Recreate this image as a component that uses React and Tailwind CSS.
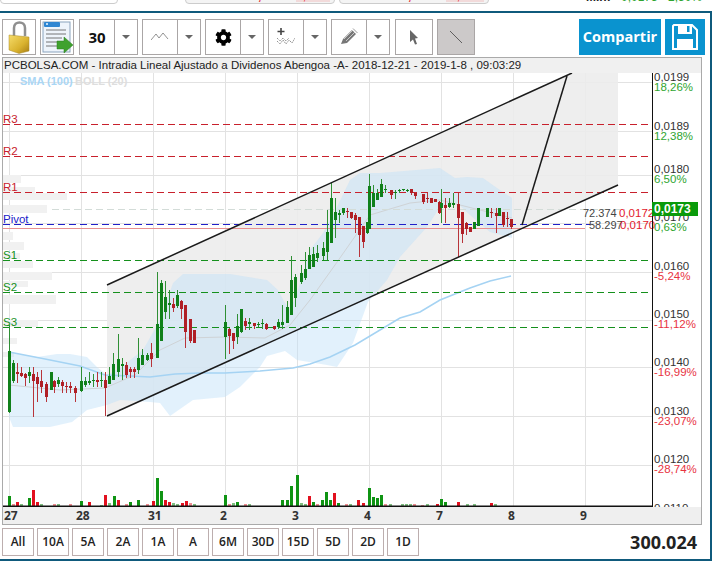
import { FaCog } from "react-icons/fa";

const font = { fontFamily: '"Liberation Sans", Arial, sans-serif' };
const openSans = { fontFamily: '"Open Sans", sans-serif' };

// x, body top, body bottom, high, low, colour
const candles = [
  [9,351,412,325,413,"g"],[13,363,381,360,383,"g"],[17,372,374,363,383,"r"],[21,373,376,367,377,"r"],[25,374,378,373,386,"r"],[29,372,376,367,383,"g"],
  [33,374,381,367,417,"r"],[37,377,384,372,402,"r"],[41,381,387,370,393,"r"],[46,384,397,382,402,"r"],[51,372,390,372,390,"g"],[54,381,387,380,393,"r"],
  [58,380,384,377,387,"g"],[62,382,386,380,393,"r"],[66,386,387,382,393,"r"],[70,386,388,382,393,"r"],[75,388,393,386,402,"r"],
  [81,381,391,367,392,"g"],[85,381,385,377,387,"g"],[89,381,383,372,385,"g"],[93,380,381,374,387,"g"],[97,380,382,372,387,"r"],[101,380,381,372,387,"g"],
  [105,380,388,372,416,"r"],[109,376,384,367,384,"g"],[113,364,380,353,380,"g"],[118,359,372,334,377,"g"],[122,364,366,358,380,"g"],[126,365,375,362,378,"r"],
  [130,369,372,367,378,"r"],[134,369,372,367,378,"r"],[138,358,370,338,374,"g"],[142,355,365,349,365,"g"],[147,355,360,353,361,"g"],[151,353,359,343,367,"r"],
  [157,324,358,272,358,"g"],[161,283,341,280,341,"g"],[165,297,312,281,319,"g"],[169,303,305,290,319,"g"],[173,304,308,298,312,"r"],
  [177,295,306,290,308,"g"],[181,301,309,300,319,"r"],[185,305,332,305,348,"r"],[190,319,341,319,343,"r"],[194,330,343,330,343,"r"],
  [225,322,337,305,359,"g"],[229,329,336,328,354,"r"],[233,333,341,333,349,"r"],[237,326,337,314,344,"g"],[241,309,332,309,333,"g"],[245,321,326,318,330,"r"],
  [249,322,324,318,330,"g"],[254,323,326,323,329,"r"],[258,324,325,322,327,"g"],[262,323,324,319,329,"g"],[266,324,329,323,330,"r"],[274,326,329,326,330,"r"],
  [278,322,327,319,329,"g"],[282,322,325,305,329,"g"],[287,307,323,301,323,"g"],[291,280,315,256,315,"g"],[295,277,298,274,307,"g"],[301,273,282,265,284,"g"],
  [305,269,278,252,280,"g"],[309,255,269,247,269,"g"],[313,254,267,247,267,"g"],[317,253,258,245,262,"g"],[323,248,256,242,260,"g"],[327,232,252,210,260,"g"],
  [331,198,243,183,243,"g"],[335,212,220,198,238,"g"],[339,213,215,210,223,"g"],[343,208,213,208,215,"g"],[347,211,212,208,218,"r"],[351,212,218,212,219,"r"],
  [355,215,220,213,233,"r"],[359,217,235,217,257,"r"],[363,226,242,226,248,"r"],[367,222,233,222,234,"g"],[369,186,229,174,229,"g"],[373,193,207,185,207,"g"],
  [377,193,200,189,200,"g"],[381,184,197,179,197,"g"],[385,189,190,185,193,"g"],[391,190,195,190,199,"r"],[395,192,193,190,199,"g"],[399,190,191,189,193,"g"],
  [403,189,190,189,191,"g"],[407,190,191,189,192,"g"],[411,189,193,189,195,"r"],[415,193,196,192,199,"r"],[423,194,202,194,204,"r"],[427,198,199,193,203,"r"],
  [431,198,203,198,203,"r"],[435,199,202,199,202,"r"],[439,202,213,201,214,"r"],[441,203,208,189,223,"g"],[445,205,208,198,223,"r"],[449,203,207,198,208,"g"],
  [453,203,205,193,208,"g"],[458,204,218,193,257,"r"],[462,212,234,212,243,"r"],[466,223,229,222,235,"r"],[470,227,232,227,232,"r"],[474,222,229,222,229,"g"],
  [478,208,226,208,226,"g"],[487,208,217,208,217,"g"],[491,212,213,208,218,"r"],[496,213,216,208,233,"r"],[499,208,216,208,216,"g"],[503,212,225,212,227,"r"],
  [507,218,219,212,227,"r"],[511,219,227,219,229,"r"],
];

// x, height, colour
const volumes = [
  [9,10,"g"],[13,2,"lr"],[17,4,"r"],[21,2,"lg"],[29,8,"g"],[33,16,"r"],[37,4,"r"],[41,2,"lg"],[54,2,"lr"],[58,2,"lg"],[70,2,"lr"],[81,5,"g"],[89,4,"r"],
  [101,1,"lg"],[105,11,"r"],[109,3,"lg"],[114,10,"g"],[118,6,"r"],[126,2,"lr"],[130,4,"g"],[138,6,"g"],[147,2,"lr"],[153,5,"r"],[157,28,"g"],[161,15,"g"],
  [165,6,"r"],[169,4,"r"],[173,3,"lg"],[177,2,"lg"],[182,3,"r"],[186,5,"r"],[190,3,"lr"],[194,2,"lg"],[225,11,"g"],[229,2,"lr"],[233,3,"lg"],[237,4,"g"],
  [245,2,"lr"],[249,2,"lg"],[282,6,"g"],[287,6,"g"],[291,20,"g"],[297,31,"g"],[301,3,"lg"],[305,2,"lg"],[309,10,"r"],[313,4,"g"],[317,2,"lr"],[322,6,"g"],
  [326,14,"g"],[330,6,"g"],[334,13,"r"],[338,3,"g"],[346,2,"lr"],[350,2,"lg"],[358,6,"r"],[363,3,"r"],[369,18,"g"],[373,9,"g"],[377,8,"g"],[381,11,"g"],
  [385,2,"lr"],[390,2,"lg"],[402,2,"lg"],[406,2,"lg"],[410,2,"lg"],[414,2,"lr"],[422,1,"lr"],[427,2,"lg"],[437,2,"r"],[441,7,"g"],[445,4,"g"],[458,4,"r"],
  [467,2,"lg"],[474,2,"lg"],[491,3,"r"],[495,2,"lg"],
];

const volColor = { g: "#0f9413", r: "#e2101e", lg: "#7fbf80", lr: "#ee8d90" };

const axisLabels = [
  ["0,0199", "18,26%", 81, "#2fa52f"],
  ["0,0189", "12,38%", 130, "#2fa52f"],
  ["0,0180", "6,50%", 173, "#2fa52f"],
  ["0,0170", "0,63%", 221, "#2fa52f"],
  ["0,0160", "-5,24%", 270, "#e8333f"],
  ["0,0150", "-11,12%", 318, "#e8333f"],
  ["0,0140", "-16,99%", 366, "#e8333f"],
  ["0,0130", "-23,07%", 415, "#e8333f"],
  ["0,0120", "-28,74%", 463, "#e8333f"],
  ["0,0110", "", 512, ""],
];

const levels = [
  ["R3", 124.5, "#c8202c"],
  ["R2", 156.5, "#c8202c"],
  ["R1", 192.5, "#c8202c"],
  ["Pivot", 224.5, "#2020c8"],
  ["S1", 260.5, "#15901c"],
  ["S2", 292.5, "#15901c"],
  ["S3", 327.5, "#15901c"],
];

const profile = [
  [21,175,8],[35,187,6],[67,193,7],[47,205,8],[13,232,8],[24,242,8],[20,253,6],[33,261,7],[52,272,8],[28,281,6],[56,295,9],[38,320,7],[17,338,6],[14,352,5],
];

const days = ["27", "28", "31", "2", "3", "4", "7", "8", "9"];
const ranges = ["All", "10A", "5A", "2A", "1A", "A", "6M", "30D", "15D", "5D", "2D", "1D"];

const bollUpper = "9,350 13,353 37,357 57,354 70,354 87,357 97,367 107,375 120,368 143,350 160,320 173,283 183,274 230,274 267,280 278,290 285,303 290,310 297,293 310,250 323,233 337,207 350,180 360,173 380,173 440,168 455,178 467,177 483,178 497,188 512,198";
const bollLower = "512,238 490,232 470,215 457,203 440,207 427,227 400,257 387,280 368,302 353,343 337,367 327,365 297,360 285,351 267,356 260,367 240,387 225,397 193,400 170,416 160,403 150,402 120,400 107,405 87,410 72,422 50,427 13,427 9,417";

function Chart() {
  return (
    <svg width="698" height="434" viewBox="3 73 698 434" className="block" style={font}>
      {[9, 81, 153, 225, 297, 369, 441, 513, 585].map((x) => (
        <line key={x} x1={x + 0.5} x2={x + 0.5} y1="73" y2="506" stroke="#e2e2e2" />
      ))}
      {[82, 131, 175, 223, 272, 320, 367, 416, 465].map((y) => (
        <line key={y} x1="3" x2="652" y1={y + 0.5} y2={y + 0.5} stroke="#e2e2e2" />
      ))}
      {profile.map(([w, y, h]) => (
        <rect key={y} x="3" y={y} width={w - 3} height={h} fill="#f1f1f1" />
      ))}

      <polygon points="107,285 572,73 618,73 618,185 107,416" fill="#ececec" fillOpacity="0.9" />
      <polygon points={`${bollUpper} ${bollLower}`} fill="#bfe1f8" fillOpacity="0.45" />
      <polyline
        points="9,385 60,390 105,388 135,375 160,350 185,338 225,337 265,338 290,325 310,300 335,265 370,215 410,203 440,200 480,210 512,218"
        fill="none"
        stroke="#cfd3d6"
        strokeWidth="1"
      />
      <polyline
        points="9,352 40,358 80,366 105,375 130,376 150,377 175,374 200,373 225,373 260,371 293,368 310,364 330,357 355,345 380,330 400,318 420,312 440,300 470,288 490,281 511,276"
        fill="none"
        stroke="#a5d3f3"
        strokeWidth="1.5"
      />

      <line x1="52" x2="625" y1="209.5" y2="209.5" stroke="#d3dcd8" strokeDasharray="7 4" />
      {levels.map(([name, y, color]) => (
        <g key={name}>
          <line x1="3" x2={name === "Pivot" ? 590 : 648} y1={y} y2={y} stroke={color} strokeDasharray="7 4" />
          <text x="3" y={y - 1.5} fontSize="11.5" fill={color}>{name}</text>
        </g>
      ))}
      <line x1="3" x2="585" y1="228.5" y2="228.5" stroke="#e88f8f" />

      {candles.map(([x, top, bottom, hi, lo, c], i) => (
        <g key={i} fill={c === "g" ? "#10801a" : "#b01f26"}>
          <rect x={x} y={hi} width="1" height={lo - hi} fill={c === "g" ? "#2f8f35" : "#b8343a"} />
          <rect x={x - 1} y={top} width="3" height={Math.max(bottom - top, 1)} />
        </g>
      ))}

      {volumes.map(([x, h, c]) => (
        <rect key={x} x={x - 1} y={506 - h} width="3" height={h} fill={volColor[c]} />
      ))}

      <line x1="107" y1="285" x2="572" y2="73" stroke="#1a1a1a" strokeWidth="1.5" />
      <line x1="107" y1="416" x2="618" y2="185" stroke="#1a1a1a" strokeWidth="1.5" />
      <line x1="522" y1="225" x2="567" y2="76" stroke="#1a1a1a" strokeWidth="1.5" />

      <text x="20" y="85" fontSize="11" fontWeight="700" fill="#a9d6f5">SMA (100)</text>
      <text x="75" y="85" fontSize="11" fontWeight="700" fill="#dedede">BOLL (20)</text>

      <text x="583" y="217" fontSize="11" fill="#444">72.374</text>
      <text x="619" y="217" fontSize="11.5" fill="#e2202c">0,0172</text>
      <text x="589" y="229" fontSize="11" fill="#444">58.297</text>
      <text x="620" y="229" fontSize="11.5" fill="#e2202c">0,0170</text>

      <rect x="3" y="505.5" width="649" height="1.5" fill="#111" />
      <line x1="652.5" x2="652.5" y1="73" y2="507" stroke="#111" />

      {axisLabels.map(([value, pct, y, color]) => (
        <g key={value}>
          <text x="654" y={y} fontSize="11.5" fill="#333">{value}</text>
          {pct && <text x="654" y={y + 10} fontSize="11.5" fill={color}>{pct}</text>}
        </g>
      ))}
      <rect x="652" y="202" width="46" height="14" fill="#0a9a0a" />
      <text x="654" y="213" fontSize="12" fontWeight="700" fill="#fff">0,0173</text>
    </svg>
  );
}

function Lock() {
  return (
    <svg width="31" height="34" viewBox="0 0 31 34">
      <defs>
        <linearGradient id="gold" x1="0" y1="0" x2="1" y2="1">
          <stop offset="0" stopColor="#f6dc6a" />
          <stop offset="0.6" stopColor="#d9b22e" />
          <stop offset="1" stopColor="#a67c14" />
        </linearGradient>
      </defs>
      <path d="M10 16 V8 C10 0.5 21 0.5 21 8 V16" fill="none" stroke="#8f8f8f" strokeWidth="2.5" />
      <path d="M5 15 L25 17 V31 L15 33.5 L5 30 Z" fill="url(#gold)" stroke="#a88a2a" strokeWidth="0.5" />
    </svg>
  );
}

function Doc() {
  return (
    <svg width="32" height="34" viewBox="0 0 32 34">
      <rect x="2" y="2" width="27" height="30" fill="#eef4fb" stroke="#8aa3bd" />
      <rect x="3" y="2" width="16" height="5" rx="1" fill="#2f86d2" />
      <rect x="5" y="3" width="2" height="2" fill="#bcdcf5" />
      <path d="M5 10h20M5 14h20M5 18h16M5 22h12M5 26h12" stroke="#555" strokeWidth="0.8" />
      <path d="M16 21h7v-4l9 8-9 8v-4h-7z" fill="#3fa12e" stroke="#2b7d1f" strokeWidth="0.5" />
    </svg>
  );
}

function LineIcon() {
  return (
    <svg width="18" height="10" viewBox="0 0 18 10" fill="none" stroke="#777" strokeWidth="0.8">
      <path d="M0 8 L5 2 L8 6 L12 1 L17 7" />
    </svg>
  );
}

function StudyIcon() {
  return (
    <svg width="18" height="18" viewBox="0 0 18 18" fill="none">
      <path d="M4 0v7M0.5 3.5h7" stroke="#444" strokeWidth="1.6" />
      <path d="M0 13l3 3 3-4 3 4 3-4 3 3 3-5M0 10l3 3 3-3 3 3 3-3" stroke="#666" strokeWidth="0.7" strokeDasharray="1.5 0.8" />
    </svg>
  );
}

function PencilIcon() {
  return (
    <svg width="18" height="18" viewBox="0 0 18 18" fill="none">
      <path d="M1 16 L3 11 L12 2 L16 6 L7 15 Z" fill="#777" />
      <path d="M4 11 L13 2 M6 13 L15 4" stroke="#ddd" strokeWidth="0.8" />
      <path d="M13 0.5 L17.5 5" stroke="#999" strokeWidth="1" />
    </svg>
  );
}

function SplitButton({ children }) {
  return (
    <div className="flex h-[36px] w-[59px] border border-[#aaa6a6]">
      <div className="flex w-[35px] items-center justify-center border-r border-[#aaa6a6]">{children}</div>
      <div className="flex flex-1 items-center justify-center">
        <div className="h-0 w-0 border-x-[4px] border-t-[4px] border-x-transparent border-t-[#666]" />
      </div>
    </div>
  );
}

export default function App() {
  return (
    <div className="h-[567px] w-[712px] overflow-hidden bg-white text-[#222]" style={font}>
      <div className="h-[11px] overflow-hidden text-[12px] leading-none">
        <div className="-mt-[15px] flex h-[19px] items-end">
          <div className="flex h-full w-[118px] items-end justify-between rounded border border-[#ccc] px-1 pb-[1px]">
            <span>Ean:</span>
            <span>3.196</span>
          </div>
          <div className="ml-[67px] flex h-full w-[150px] items-end justify-end gap-2 rounded border border-[#ccc] bg-[#f4f4f4] px-1 pb-[1px]">
            <span>72.374</span>
            <span className="font-bold text-[#e2202c]">0,0172</span>
            <span className="bg-[#f2dada] text-[#e2202c]">0,04%</span>
          </div>
          <div className="ml-[4px] flex h-full w-[150px] items-end justify-end gap-2 rounded border border-[#ccc] bg-[#f4f4f4] px-1 pb-[1px]">
            <span>58.297</span>
            <span className="font-bold text-[#e2202c]">0,0170</span>
            <span className="bg-[#f2dada] text-[#e2202c]">-1,73%</span>
          </div>
          <div className="ml-[95px] flex h-full w-[120px] items-end justify-between px-[2px] pb-[1px]">
            <span className="font-bold">Mín:</span>
            <span className="text-[#2fa52f]">0,0175</span>
            <span className="text-[#2fa52f]">2,50%</span>
          </div>
        </div>
      </div>

      <div className="h-[550px] border-y-2 border-r-2 border-[#0f5a7c]">
        <div className="flex items-stretch pl-[2px] pt-[6px]">
          <div className="flex h-[36px] w-[34px] items-center justify-center border border-[#aaa6a6]"><Lock /></div>
          <div className="ml-[4px] flex h-[36px] w-[34px] items-center justify-center border border-[#aaa6a6]"><Doc /></div>
          <div className="ml-[5px] flex gap-[4px]">
            <SplitButton>
              <span className="text-[15px] font-bold text-[#111]" style={openSans}>30</span>
            </SplitButton>
            <SplitButton><LineIcon /></SplitButton>
            <SplitButton><FaCog className="text-[17px] text-black" /></SplitButton>
            <SplitButton><StudyIcon /></SplitButton>
            <SplitButton><PencilIcon /></SplitButton>
          </div>
          <div className="ml-[5px] flex h-[36px] w-[38px] items-center justify-center border border-[#aaa6a6]">
            <svg width="10" height="16" viewBox="0 0 10 16"><path d="M1 1 L9 9 L6 9.5 L8 15 L6 15.5 L4 10.5 L1 13 Z" fill="#666" /></svg>
          </div>
          <div className="ml-[4px] flex h-[36px] w-[38px] items-center justify-center border border-[#aaa6a6] bg-[#ccc9c9]">
            <svg width="14" height="14" viewBox="0 0 14 14"><path d="M1 1 L13 13" stroke="#444" strokeWidth="0.8" /></svg>
          </div>
          <button className="ml-[104px] h-[36px] w-[82px] bg-[#0a93cf] text-[14.5px] font-bold text-white" style={openSans}>
            Compartir
          </button>
          <div className="ml-[4px] flex h-[36px] w-[40px] items-center justify-center bg-[#0a93cf]">
            <svg width="26" height="26" viewBox="0 0 26 26">
              <path d="M2 1 H20 L25 6 V25 H1 V2 Z" fill="none" stroke="#fff" strokeWidth="2" />
              <path d="M6 1 H20 V10 H6 Z" fill="#fff" />
              <rect x="15" y="2" width="2.5" height="6" fill="#0a93cf" />
              <rect x="5" y="15" width="16" height="10" fill="#fff" />
            </svg>
          </div>
        </div>

        <div className="ml-[2px] mt-[2px] h-[468px] w-[700px] border border-[#aaa]">
          <div className="h-[15px] bg-[#f0f0f0] pl-[1px] text-[11.5px] leading-[15px] text-[#222]">
            PCBOLSA.COM - Intradia Lineal Ajustado a Dividenos Abengoa -A- 2018-12-21 - 2019-1-8 , 09:03:29
          </div>
          <Chart />
          <div className="flex h-[17px] bg-[#efefef] pl-[1px] text-[12px] font-bold leading-[17px] text-[#333]" style={openSans}>
            {days.map((d) => (
              <div key={d} className="w-[72px]">{d}</div>
            ))}
          </div>
        </div>

        <div className="mt-[3px] flex items-center justify-between pl-[2px] pr-[13px]">
          <div className="flex gap-[3px]">
            {ranges.map((r) => (
              <div
                key={r}
                className="flex h-[28px] w-[32px] items-center justify-center border border-[#bcaeae] text-[12px] font-semibold text-[#222]"
                style={openSans}
              >
                {r}
              </div>
            ))}
          </div>
          <div className="text-[18px] font-bold text-[#222]" style={openSans}>300.024</div>
        </div>
      </div>
    </div>
  );
}
